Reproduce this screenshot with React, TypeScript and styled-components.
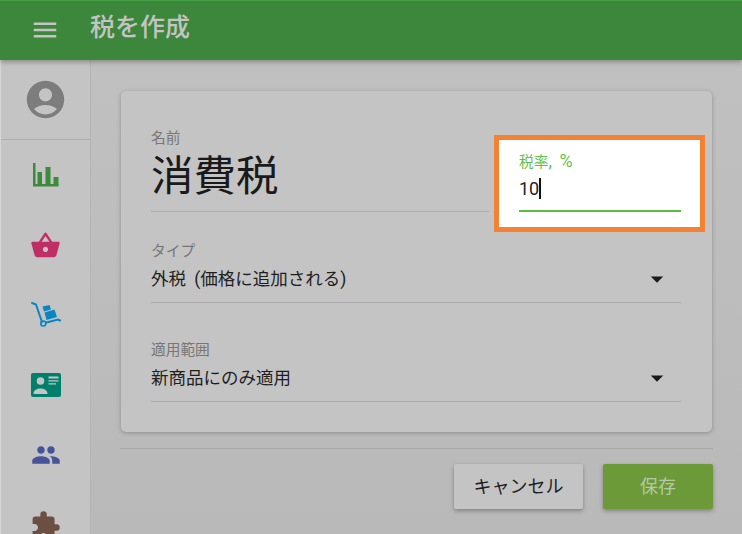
import React from 'react';
import styled, { createGlobalStyle } from 'styled-components';
import { MdAccountCircle, MdArrowDropDown, MdExtension, MdMenu, MdPeople, MdShoppingBasket } from 'react-icons/md';

const GlobalStyle = createGlobalStyle`
  html, body {
    margin: 0;
    padding: 0;
    height: 100%;
    overflow: hidden;
    background: #bcbcbc;
  }
  * {
    box-sizing: border-box;
  }
`;

const Page = styled.div`
  width: 742px;
  height: 534px;
  display: flex;
  flex-direction: column;
  overflow: hidden;
  font-family: Roboto, "Noto Sans CJK JP", sans-serif;
`;

const Header = styled.header`
  flex: none;
  height: 60px;
  display: flex;
  align-items: center;
  gap: 30px;
  padding-left: 30px;
  background: #3c873c;
  border-top: 1px solid #45a045;
  box-shadow: 0 2px 5px rgba(0, 0, 0, 0.3);
  position: relative;
  z-index: 2;
`;

const MenuIcon = styled(MdMenu)`
  margin-top: -2px;
  font-size: 30px;
  color: #c4c4c4;
`;

const HeaderTitle = styled.h1`
  margin: -12px 0 0;
  font-size: 25px;
  font-weight: 500;
  color: #c4c4c4;
`;

const Body = styled.div`
  flex: 1;
  min-height: 0;
  display: flex;
`;

const Sidebar = styled.nav`
  flex: none;
  width: 91px;
  display: flex;
  flex-direction: column;
  align-items: stretch;
  background: #c4c4c4;
  border-left: 1px solid #d6d6d6;
  border-right: 1px solid #b4b4b4;
  box-shadow: 2px 0 6px rgba(0, 0, 0, 0.12);
`;

const AvatarRow = styled.div`
  flex: none;
  height: 80px;
  display: flex;
  align-items: center;
  justify-content: center;
  border-bottom: 1px solid #adadad;
`;

const Avatar = styled(MdAccountCircle)`
  font-size: 45px;
  color: #7d7d7d;
`;

const NavItem = styled.div<{ $color: string }>`
  flex: none;
  height: 70px;
  display: flex;
  align-items: center;
  justify-content: center;
  color: ${props => props.$color};
`;

const Main = styled.main`
  flex: 1;
  min-width: 0;
  padding: 31px 29px 0 29px;
  background: linear-gradient(180deg, #c0c0c0 0%, #b9b9b9 100%);
`;

const Card = styled.section`
  height: 341px;
  margin: 0 1px;
  padding: 37px 31px 0 30px;
  background: #c4c4c4;
  border-radius: 5px;
  box-shadow: 0 1px 4px rgba(0, 0, 0, 0.25);
`;

const TopRow = styled.div`
  display: flex;
  align-items: flex-start;
`;

const NameField = styled.div`
  flex: none;
  width: 338px;
  height: 84px;
  border-bottom: 1px solid #adadad;
`;

const Label = styled.div`
  font-size: 14.7px;
  line-height: 20px;
  color: #777777;
`;

const NameValue = styled.div`
  margin-top: 4px;
  font-size: 42.5px;
  line-height: 50px;
  color: #1a1a1a;
`;

const RateBox = styled.div`
  flex: none;
  width: 211px;
  height: 97px;
  margin: 7px -24px 0 5px;
  padding: 11px 19px 0 20px;
  background: #ffffff;
  border: 5px solid #f58233;
  position: relative;
  z-index: 1;
`;

const RateLabel = styled.div`
  font-size: 14.7px;
  line-height: 20px;
  color: #61c44a;
`;

const RateUnit = styled.span`
  font-size: 18px;
  letter-spacing: 1px;
  word-spacing: 1px;
`;

const RateInput = styled.div`
  height: 41px;
  padding-top: 6px;
  font-size: 18px;
  line-height: 24px;
  color: #222222;
  border-bottom: 2px solid #5abf3c;
  margin-top: -1px;
  display: flex;
  align-items: flex-start;
`;

const Caret = styled.span`
  display: inline-block;
  width: 1.5px;
  height: 21px;
  margin-top: 1px;
  background: #111111;
`;

const SelectField = styled.div<{ $top: number }>`
  margin-top: ${props => props.$top}px;
  height: 62px;
  border-bottom: 1px solid #adadad;
  display: flex;
  flex-direction: column;
`;

const SelectRow = styled.div`
  display: flex;
  align-items: center;
  justify-content: space-between;
  margin-top: 3px;
  padding-right: 9px;
`;

const SelectValue = styled.div`
  font-size: 17.5px;
  line-height: 24px;
  word-spacing: 4px;
  color: #1f1f1f;
`;

const Arrow = styled(MdArrowDropDown)`
  font-size: 30px;
  color: #1a1a1a;
`;

const Footer = styled.footer`
  margin-top: 16px;
  padding-top: 15px;
  border-top: 1px solid #a9a9a9;
  display: flex;
  justify-content: flex-end;
  gap: 20px;
`;

const Button = styled.button<{ $primary?: boolean }>`
  height: 45px;
  width: ${props => (props.$primary ? '110px' : '129px')};
  padding: 0 0 4px;
  border: none;
  border-radius: 2px;
  font-family: inherit;
  font-size: 18px;
  background: ${props => (props.$primary ? '#6d9a38' : '#c4c4c4')};
  color: ${props => (props.$primary ? '#b4c9a6' : '#1f1f1f')};
  box-shadow: 0 2px 4px rgba(0, 0, 0, 0.3);
`;

const ChartIcon = () => (
  <svg width="26" height="24" viewBox="0 0 26 24" fill="currentColor">
    <path d="M0 0h2.500v21H25.500v2.500H0z" />
    <path d="M4.500 9H9v13H4.500zM12.500 4h5v18h-5zM20.500 14h5v8h-5z" />
  </svg>
);

const DollyIcon = () => (
  <svg width="30" height="26" viewBox="0 0 30 26" fill="currentColor">
    <path d="M1 1l4 1.500L11 20" fill="none" stroke="currentColor" strokeWidth="2" strokeLinecap="round" />
    <circle cx="12.300" cy="21.500" r="2.500" fill="none" stroke="currentColor" strokeWidth="1.600" />
    <path d="M15.500 20.500L27 17.500l2 1" fill="none" stroke="currentColor" strokeWidth="2" strokeLinecap="round" />
    <path d="M11.500 4.500L18.500 3 20 7.500 13 9.500zM13.500 10.500L23.500 7.500 26 15 15.500 18z" />
  </svg>
);

const CardIcon = () => (
  <svg width="30" height="24" viewBox="0 0 30 24">
    <rect width="30" height="24" rx="2" fill="currentColor" />
    <circle cx="9.500" cy="8" r="3.800" fill="#c4c4c4" />
    <path d="M2.500 21c0-4 3.500-5.500 7-5.500s7 1.500 7 5.500z" fill="#c4c4c4" />
    <path d="M17.500 3.500h10v2h-10zM17.500 7.200h10v1.300h-10zM17.500 10.200h7.500v1.300h-7.500z" fill="#c4c4c4" />
  </svg>
);

const navItems = [
  { color: '#3c8a3c', icon: <ChartIcon /> },
  { color: '#bf2f66', icon: <MdShoppingBasket size={31} /> },
  { color: '#0a85c2', icon: <DollyIcon /> },
  { color: '#00806c', icon: <CardIcon /> },
  { color: '#46539c', icon: <MdPeople size={30} /> },
  { color: '#6b4f43', icon: <MdExtension size={31} /> },
];

export default function App() {
  return (
    <Page>
      <GlobalStyle />
      <Header>
        <MenuIcon />
        <HeaderTitle>税を作成</HeaderTitle>
      </Header>
      <Body>
        <Sidebar>
          <AvatarRow>
            <Avatar />
          </AvatarRow>
          {navItems.map((item, i) => (
            <NavItem key={i} $color={item.color}>
              {item.icon}
            </NavItem>
          ))}
        </Sidebar>
        <Main>
          <Card>
            <TopRow>
              <NameField>
                <Label>名前</Label>
                <NameValue>消費税</NameValue>
              </NameField>
              <RateBox>
                <RateLabel>
                  税率<RateUnit>, %</RateUnit>
                </RateLabel>
                <RateInput>
                  10
                  <Caret />
                </RateInput>
              </RateBox>
            </TopRow>
            <SelectField $top={9}>
              <Label>タイプ</Label>
              <SelectRow>
                <SelectValue>外税 (価格に追加される)</SelectValue>
                <Arrow />
              </SelectRow>
            </SelectField>
            <SelectField $top={37}>
              <Label>適用範囲</Label>
              <SelectRow>
                <SelectValue>新商品にのみ適用</SelectValue>
                <Arrow />
              </SelectRow>
            </SelectField>
          </Card>
          <Footer>
            <Button>キャンセル</Button>
            <Button $primary>保存</Button>
          </Footer>
        </Main>
      </Body>
    </Page>
  );
}
